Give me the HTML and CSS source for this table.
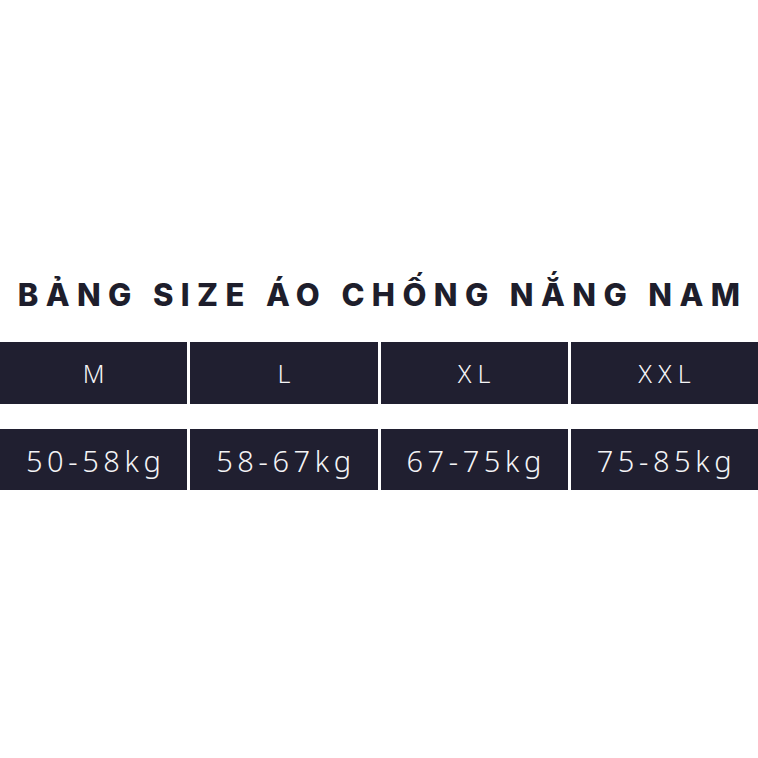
FILE: index.html
```html
<!DOCTYPE html>
<html lang="vi">
<head>
<meta charset="utf-8">
<link rel="stylesheet" href="styles.css">
</head>
<body>
<div class="page">
  <h1 class="title">BẢNG SIZE ÁO CHỐNG NẮNG NAM</h1>
  <div class="row row-head">
    <div class="cell">M</div>
    <div class="cell">L</div>
    <div class="cell">XL</div>
    <div class="cell">XXL</div>
  </div>
  <div class="row row-weight">
    <div class="cell">50-58kg</div>
    <div class="cell">58-67kg</div>
    <div class="cell">67-75kg</div>
    <div class="cell">75-85kg</div>
  </div>
</div>
</body>
</html>
```
FILE: styles.css
```css
html, body {
  margin: 0;
  padding: 0;
  background: #ffffff;
}
.page {
  width: 758px;
  height: 758px;
  padding-top: 272px;
  box-sizing: border-box;
}
.title {
  margin: 0 0 24px 0;
  text-align: center;
  font-family: "Inter", "Liberation Sans", sans-serif;
  font-weight: 800;
  font-size: 31px;
  line-height: 46px;
  letter-spacing: 7.4px;
  color: #1e1e2c;
  padding-left: 7px;
}
.row {
  display: grid;
  grid-template-columns: repeat(4, 1fr);
  column-gap: 3px;
}
.cell {
  background: #201f30;
  color: #f4f4f6;
  font-family: "Noto Sans", "DejaVu Sans", sans-serif;
  font-weight: 300;
  text-align: center;
}
.row-head .cell {
  height: 62px;
  line-height: 62px;
  font-size: 25px;
  letter-spacing: 6px;
  padding-left: 6px;
}
.row-weight {
  margin-top: 25px;
}
.row-weight .cell {
  height: 61px;
  line-height: 63px;
  font-size: 29px;
  letter-spacing: 4.6px;
  padding-left: 4px;
}
```
